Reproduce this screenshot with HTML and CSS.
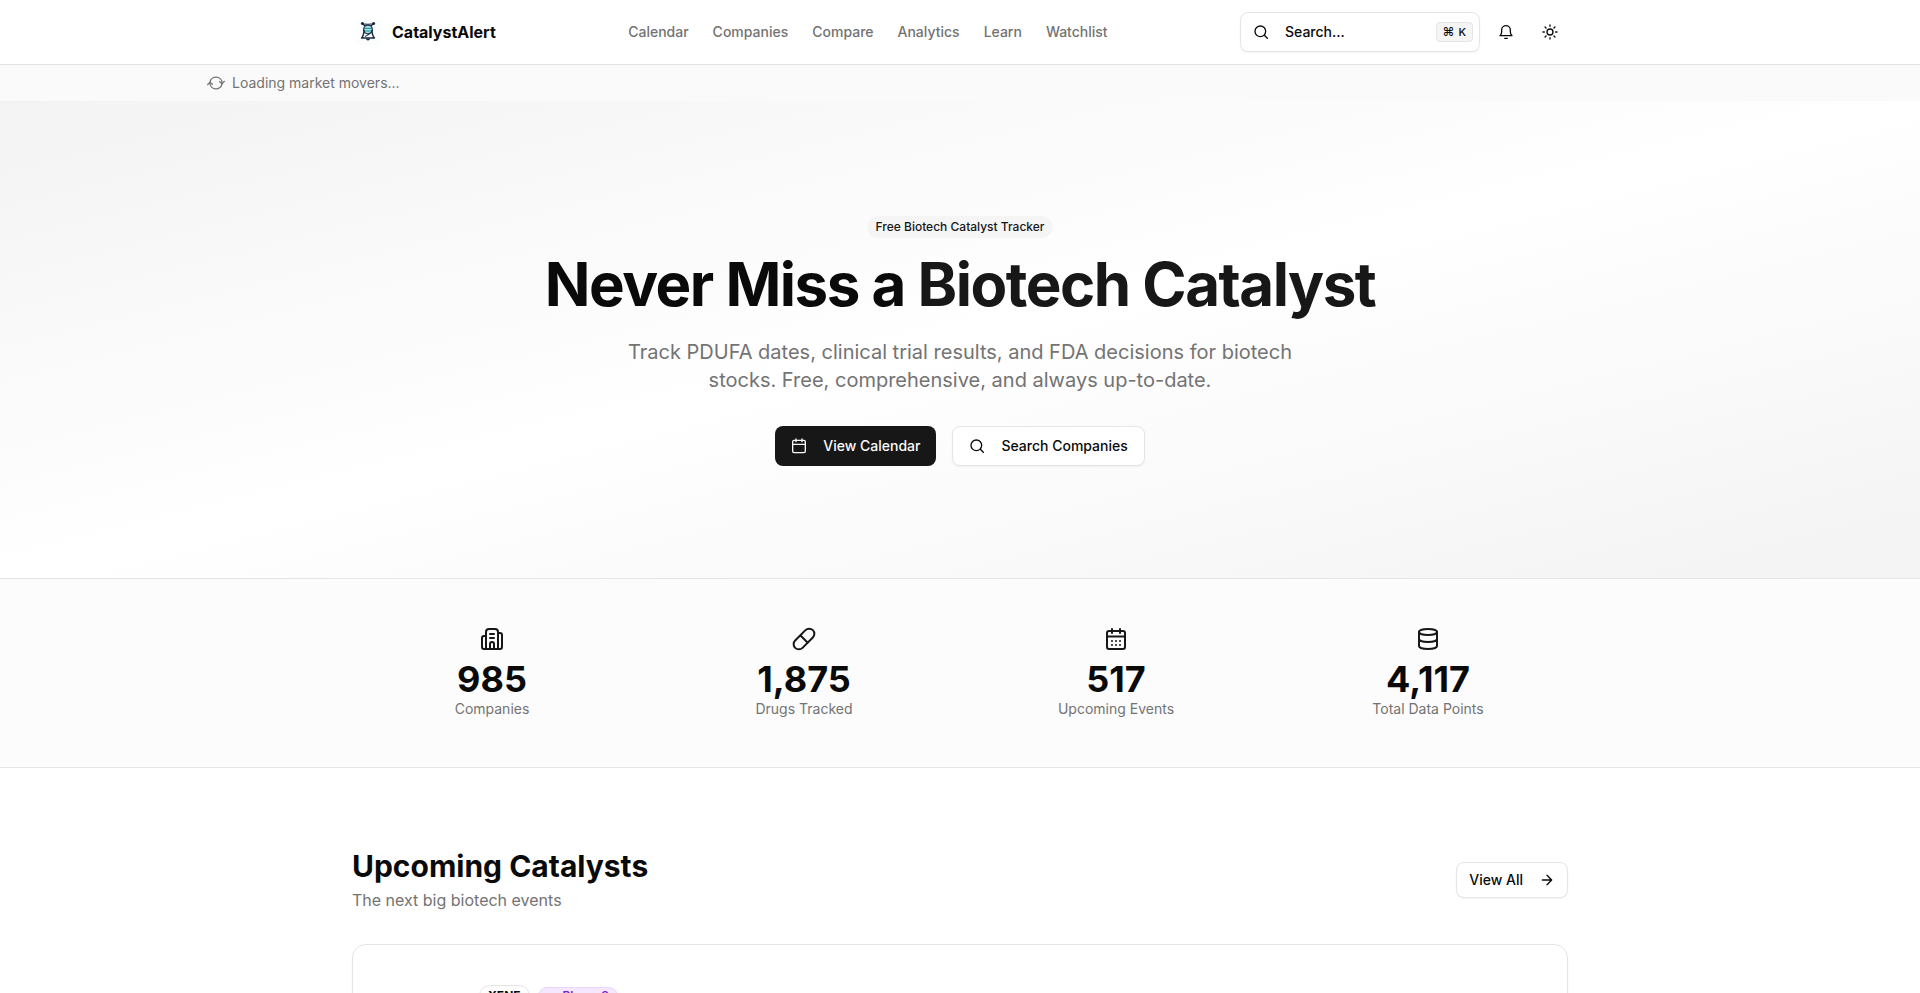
FILE: index.html
```html
<!DOCTYPE html>
<html lang="en">
<head>
  <meta charset="UTF-8" />
  <meta name="viewport" content="width=device-width, initial-scale=1.0"/>
  <title>CatalystAlert - Free Biotech Catalyst Tracker</title>
  <link rel="stylesheet" href="styles.css">
</head>
<body>

<header class="site-header">
  <div class="container header-inner">
    <a class="brand" href="#">
      <svg class="logo" viewBox="0 0 32 32" aria-hidden="true">
        <rect x="4" y="4" width="25" height="25" fill="#fcfdfd"/>
        <circle cx="16" cy="13.500" r="4" fill="#a5e3e4"/>
        <path d="M10.500 7.500c2.200 1.200 8.800.800 11 0" stroke="#17293f" stroke-width="1" fill="none"/>
        <path d="M10.500 7.500L13 10M21.500 7.500L19 10" stroke="#17293f" stroke-width="1.400"/>
        <circle cx="10.400" cy="7.400" r="1.500" fill="#17293f"/>
        <circle cx="21.600" cy="7.400" r="1.500" fill="#17293f"/>
        <circle cx="16" cy="13.500" r="4.300" stroke="#17293f" stroke-width="1.300" fill="none"/>
        <path d="M12.500 12.400h7M12.500 15h7" stroke="#1d8c96" stroke-width="1"/>
        <path d="M12 14c0 4-.5 6-2.500 8h13c-2-2-2.500-4-2.500-8" stroke="#17293f" stroke-width="1.400" fill="none" stroke-linejoin="round"/>
        <path d="M18.500 16.500c-1 2-3.500 3-5.500 4" stroke="#17293f" stroke-width="1.100" fill="none"/>
        <path d="M14 22.500a2 2 0 0 0 4 0z" fill="#17293f"/>
      </svg>
      <span>CatalystAlert</span>
    </a>

    <nav class="main-nav">
      <a href="#">Calendar</a>
      <a href="#">Companies</a>
      <a href="#">Compare</a>
      <a href="#">Analytics</a>
      <a href="#">Learn</a>
      <a href="#">Watchlist</a>
    </nav>

    <div class="header-actions">
      <button type="button" class="search-btn">
        <svg class="icon" viewBox="0 0 24 24"><circle cx="11" cy="11" r="8"/><path d="M17 17l4.500 4.500"/></svg>
        <span>Search...</span>
        <kbd><span class="cmd">⌘</span><span>K</span></kbd>
      </button>
      <button type="button" class="icon-btn" aria-label="Notifications">
        <svg class="icon" viewBox="0 0 24 24"><path d="M3 17.500c2-1.800 2.500-3.500 2.500-6V9a6.500 6.500 0 0 1 13 0v2.500c0 2.500.5 4.200 2.500 6z"/><path d="M10 21.500h4"/></svg>
      </button>
      <button type="button" class="icon-btn" aria-label="Toggle theme">
        <svg class="icon" viewBox="0 0 24 24"><circle cx="12" cy="12" r="4.500"/><path d="M12 1.500v2M12 20.500v2M1.500 12h2M20.500 12h2M4.600 4.600L6 6M18 18l1.400 1.400M4.600 19.400L6 18M18 6l1.400-1.400"/></svg>
      </button>
    </div>
  </div>
</header>

<div class="ticker">
  <div class="ticker-inner">
    <svg class="icon" viewBox="0 0 24 24"><path d="M3 10.500a9.200 9.200 0 0 1 18.200 2M21 13.500a9.200 9.200 0 0 1-18.200-2"/><path d="M17.500 10l3.700 3 3.300-3.500M6.500 14l-3.700-3-3.300 3.500"/></svg>
    <span>Loading market movers...</span>
  </div>
</div>

<main>
  <section class="hero">
    <div class="badge-row"><span class="badge badge-soft">Free Biotech Catalyst Tracker</span></div>
    <h1>Never Miss a <span>Biotech Catalyst</span></h1>
    <p>Track PDUFA dates, clinical trial results, and FDA decisions for biotech stocks. Free, comprehensive, and always up-to-date.</p>
    <div class="hero-actions">
      <a class="btn btn-primary" href="#">
        <svg class="icon" viewBox="0 0 24 24"><rect x="2.500" y="3.500" width="19" height="18.500" rx="2"/><path d="M7.500 1.500v4M16.500 1.500v4M2.500 9.500h19"/></svg>
        View Calendar
      </a>
      <a class="btn btn-outline" href="#">
        <svg class="icon" viewBox="0 0 24 24"><circle cx="11" cy="11" r="8"/><path d="M17 17l4.500 4.500"/></svg>
        Search Companies
      </a>
    </div>
  </section>

  <section class="stats">
    <div class="container stats-grid">
      <div class="stat">
        <svg class="icon icon-lg" viewBox="0 0 24 24"><path d="M6 22V5a3 3 0 0 1 3-3h6a3 3 0 0 1 3 3v17"/><path d="M6 9H4a2 2 0 0 0-2 2v9a2 2 0 0 0 2 2h16a2 2 0 0 0 2-2V8a2 2 0 0 0-2-2h-2"/><path d="M10 7h4M10 11h4M10 22v-5a2 2 0 0 1 4 0v5"/></svg>
        <strong>985</strong>
        <span>Companies</span>
      </div>
      <div class="stat">
        <svg class="icon icon-lg" viewBox="0 0 24 24"><rect x="-.5" y="6.800" width="25" height="10.400" rx="5.200" transform="rotate(-45 12 12)"/><path d="M8.500 8.500l7 7"/></svg>
        <strong>1,875</strong>
        <span>Drugs Tracked</span>
      </div>
      <div class="stat">
        <svg class="icon icon-lg" viewBox="0 0 24 24"><rect x="3" y="4" width="18" height="18" rx="2"/><path d="M8 2v4M16 2v4M3 9.500h18"/><path d="M8 14h0M12 14h0M16 14h0M8 18h0M12 18h0M16 18h0"/></svg>
        <strong>517</strong>
        <span>Upcoming Events</span>
      </div>
      <div class="stat">
        <svg class="icon icon-lg" viewBox="0 0 24 24"><ellipse cx="12" cy="5" rx="9" ry="3"/><path d="M3 5v14c0 1.700 4 3 9 3s9-1.300 9-3V5M3 12c0 1.700 4 3 9 3s9-1.300 9-3"/></svg>
        <strong>4,117</strong>
        <span>Total Data Points</span>
      </div>
    </div>
  </section>

  <section class="container upcoming">
    <div class="section-head">
      <div>
        <h2>Upcoming Catalysts</h2>
        <p>The next big biotech events</p>
      </div>
      <a class="btn btn-outline btn-sm" href="#">
        View All
        <svg class="icon" viewBox="0 0 24 24"><path d="M5 12h14M12 5l7 7-7 7"/></svg>
      </a>
    </div>

    <div class="card">
      <span class="badge badge-ticker">XENE</span>
      <span class="badge badge-phase">
        <svg class="icon" viewBox="0 0 24 24"><path d="M9 7v11a3 3 0 0 0 6 0V7M8 7h8M9 14h6"/></svg>
        Phase 3
      </span>
    </div>
  </section>
</main>

</body>
</html>
```
FILE: styles.css
```css
* {
  box-sizing: border-box;
}

body {
  margin: 0;
  font-family: Inter, "Noto Sans", sans-serif;
  font-size: 14px;
  line-height: 20px;
  color: #0a0a0a;
  background: #fff;
}

a {
  color: inherit;
  text-decoration: none;
}

h1, h2, p {
  margin: 0;
}

button {
  font: inherit;
  color: inherit;
  background: none;
  border: none;
  padding: 0;
  cursor: pointer;
}

.container {
  max-width: 1280px;
  margin: 0 auto;
  padding: 0 32px;
}

.icon {
  width: 16px;
  height: 16px;
  flex-shrink: 0;
  fill: none;
  stroke: currentColor;
  stroke-width: 2;
  stroke-linecap: round;
  stroke-linejoin: round;
  overflow: visible;
}

.icon-lg {
  width: 24px;
  height: 24px;
}

/* header */
.site-header {
  border-bottom: 1px solid #e5e5e5;
}

.header-inner {
  display: flex;
  align-items: center;
  justify-content: space-between;
  height: 64px;
}

.brand {
  display: flex;
  align-items: center;
  gap: 8px;
  font-size: 16px;
  line-height: 24px;
  font-weight: 700;
}

.logo {
  width: 32px;
  height: 32px;
}

.main-nav {
  display: flex;
  gap: 24px;
  font-weight: 500;
  color: #737373;
}

.main-nav a:hover {
  color: #0a0a0a;
}

.header-actions {
  display: flex;
  align-items: center;
  gap: 8px;
}

.search-btn {
  display: flex;
  align-items: center;
  gap: 16px;
  width: 240px;
  height: 40px;
  padding: 0 6px 0 12px;
  font-weight: 500;
  border: 1px solid #e5e5e5;
  border-radius: 8px;
  background: #fff;
  box-shadow: 0 1px 2px rgba(0, 0, 0, 0.05);
}

kbd {
  display: flex;
  align-items: center;
  gap: 4px;
  height: 20px;
  margin-left: auto;
  padding: 0 6px;
  font-family: inherit;
  font-size: 11px;
  border: 1px solid #e5e5e5;
  border-radius: 4px;
  background: #f5f5f5;
}

.cmd {
  font-size: 12px;
}

.icon-btn {
  display: flex;
  align-items: center;
  justify-content: center;
  width: 36px;
  height: 36px;
  border-radius: 8px;
}

.icon-btn:hover {
  background: #f5f5f5;
}

/* market movers strip */
.ticker {
  background: #fafafa;
  color: #737373;
}

.ticker-inner {
  display: flex;
  align-items: center;
  gap: 8px;
  max-width: 1536px;
  margin: 0 auto;
  padding: 8px 16px;
}

/* hero */
.hero {
  padding: 112px 32px;
  text-align: center;
  background: linear-gradient(to bottom right, #f3f3f3, #fff, #f3f3f3);
}

.badge {
  display: inline-flex;
  align-items: center;
  gap: 4px;
  height: 22px;
  padding: 0 8px;
  font-size: 12px;
  line-height: 16px;
  font-weight: 500;
  border: 1px solid transparent;
  border-radius: 11px;
}

.badge-row {
  padding-top: 3px;
}

.badge-soft {
  background: #f5f5f5;
  color: #171717;
}

.hero h1 {
  margin-top: 16px;
  font-size: 60px;
  line-height: 60px;
  font-weight: 700;
  letter-spacing: -0.025em;
}

.hero h1 span {
  color: #171717;
}

.hero p {
  max-width: 672px;
  margin: 24px auto 0;
  font-size: 20px;
  line-height: 28px;
  color: #737373;
}

.hero-actions {
  display: flex;
  justify-content: center;
  gap: 16px;
  margin-top: 32px;
}

.btn {
  display: inline-flex;
  align-items: center;
  gap: 16px;
  height: 40px;
  padding: 0 16px;
  font-weight: 500;
  border-radius: 8px;
}

.btn-primary {
  background: #171717;
  color: #fafafa;
}

.btn-outline {
  border: 1px solid #e5e5e5;
  background: #fff;
  box-shadow: 0 1px 2px rgba(0, 0, 0, 0.05);
}

.btn-sm {
  height: 36px;
  padding: 0 12px;
}

/* stats */
.stats {
  padding: 48px 0;
  border-top: 1px solid #e5e5e5;
  border-bottom: 1px solid #e5e5e5;
  background: #fcfcfc;
}

.stats-grid {
  display: grid;
  grid-template-columns: repeat(4, 1fr);
  gap: 32px;
}

.stat {
  display: flex;
  flex-direction: column;
  align-items: center;
  color: #737373;
}

.stat .icon {
  margin-bottom: 8px;
  color: #171717;
}

.stat strong {
  font-size: 36px;
  line-height: 40px;
  font-weight: 700;
  color: #0a0a0a;
}

/* upcoming */
.upcoming {
  padding-top: 80px;
}

.section-head {
  display: flex;
  align-items: center;
  justify-content: space-between;
  margin-bottom: 32px;
}

.section-head h2 {
  font-size: 30px;
  line-height: 36px;
  font-weight: 700;
}

.section-head p {
  margin-top: 4px;
  font-size: 16px;
  line-height: 24px;
  color: #737373;
}

.card {
  display: flex;
  align-items: center;
  gap: 8px;
  padding: 40px 126px;
  border: 1px solid #e5e5e5;
  border-radius: 14px;
  background: #fff;
  box-shadow: 0 1px 2px rgba(0, 0, 0, 0.05);
}

.badge-ticker {
  font-weight: 700;
  border-color: #e5e5e5;
}

.badge-phase {
  height: 18px;
  font-weight: 600;
  color: #7e22ce;
  background: #f3e8ff;
  border-color: #e9d5ff;
}

.badge-phase .icon {
  width: 12px;
  height: 12px;
}
```
